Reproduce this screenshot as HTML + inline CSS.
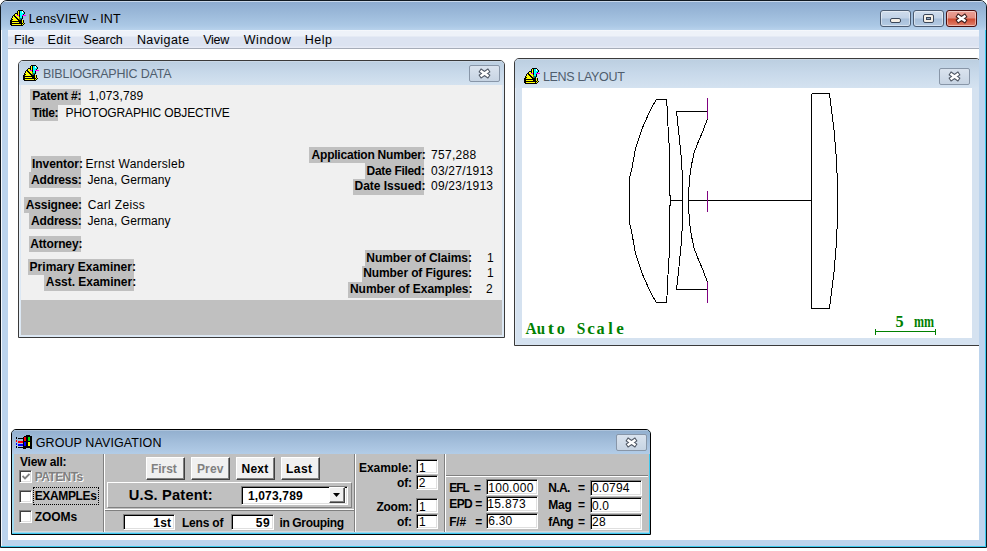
<!DOCTYPE html>
<html><head><meta charset="utf-8">
<style>
*{box-sizing:border-box}
html,body{margin:0;padding:0}
body{width:987px;height:551px;position:relative;overflow:hidden;background:#fff;font-family:"Liberation Sans",sans-serif;color:#000}
.a{position:absolute}
.tx{position:absolute;white-space:nowrap;line-height:20px;color:#000}
#win{left:0;top:0;width:987px;height:548px;background:#bcd4ed;border:1px solid #101820;border-radius:7px 7px 0 0;box-shadow:inset -1px -1px 0 #3ccbee,inset 1px 0 0 #f6f9fd}
#tbar{left:1px;top:1px;width:985px;height:29px;border-radius:6px 6px 0 0;background:linear-gradient(#c9d8ea 0,#c9d8ea 1px,#8eacd0 1px,#9cbada 45%,#abc8e5 85%,#b8d2ec 100%)}
#menu{left:8px;top:30px;width:971px;height:19px;background:linear-gradient(#fbfcfe 0,#eef2f9 1px,#eef2f9 6px,#dce3f1 7px,#dce3f1 16px,#e6eaf5 17px,#e6eaf5 18px,#a6acb8 18px)}
#client{left:8px;top:49px;width:971px;height:491px;background:#fff}
.cbtn{position:absolute;border:1px solid #4c5c72;border-radius:3px;box-shadow:inset 0 0 0 1px rgba(255,255,255,0.45)}
.child{position:absolute;border:1px solid #3a3a3a;border-radius:5px 5px 0 0;overflow:hidden;box-shadow:inset 1px 1px 0 rgba(255,255,255,0.35)}
.lb{position:absolute;background:#c0c0c0;height:16px}
.xb{position:absolute;border:1px solid #8896a8;border-radius:2px;background:linear-gradient(#dae3ee,#c7d4e3)}
.fld{position:absolute;background:#fff;border:1px solid;border-color:#808080 #fff #fff #808080;box-shadow:inset 1px 1px #000,inset -1px -1px #dfdfdf}
.btn{position:absolute;background:#f0f0f0;border:1px solid;border-color:#fff #404040 #404040 #fff;box-shadow:inset -1px -1px #808080}
.cb{position:absolute;width:13px;height:13px;background:#fff;border:1px solid;border-color:#808080 #fff #fff #808080;box-shadow:inset 1px 1px #404040,inset -1px -1px #dfdfdf}
.vd{position:absolute;width:1px;background:#808080}
.vw{position:absolute;width:1px;background:#fff}
</style></head><body>
<div id="win" class="a"></div>
<div id="tbar" class="a"></div>
<svg class="a" style="left:10px;top:10px" width="16" height="16"><use href="#lensico"/></svg>

<!-- caption buttons -->
<div class="cbtn" style="left:880px;top:10px;width:31px;height:17px;background:linear-gradient(#cfdcec 0,#c2d3e7 7px,#a7bfda 8px,#b5cbe3 100%)"></div>
<div class="a" style="left:890px;top:18px;width:11px;height:5px;border:1px solid #3a4658;border-radius:2px;background:#f5efe6"></div>
<div class="cbtn" style="left:913px;top:10px;width:31px;height:17px;background:linear-gradient(#cfdcec 0,#c2d3e7 7px,#a7bfda 8px,#b5cbe3 100%)"></div>
<div class="a" style="left:923px;top:14px;width:11px;height:9px;border:1px solid #3a4658;border-radius:2px;background:#f5efe6"></div>
<div class="a" style="left:926px;top:17px;width:5px;height:3px;border:1px solid #3a4658;background:#8fa6c0"></div>
<div class="cbtn" style="left:946px;top:10px;width:31px;height:17px;border-color:#4a0c0c;background:linear-gradient(#eba197 0,#e38d80 7px,#cf4a30 8px,#e0826e 100%)"></div>
<svg class="a" style="left:955px;top:13px" width="13" height="11" viewBox="0 0 13 11">
<path d="M3.5 3.4 L9.5 7.6 M9.5 3.4 L3.5 7.6" stroke="#3a1c1c" stroke-width="4.4" stroke-linecap="square"/>
<path d="M3.5 3.4 L9.5 7.6 M9.5 3.4 L3.5 7.6" stroke="#fff" stroke-width="2.4" stroke-linecap="square"/>
</svg>

<div id="menu" class="a"></div>
<div id="client" class="a"></div>

<!-- ===== BIBLIOGRAPHIC DATA ===== -->
<div class="child" style="left:18px;top:60px;width:487px;height:278px;background:#dce8f4">
  <div class="a" style="left:0;top:0;width:485px;height:24px;background:linear-gradient(#d9e2ec 0,#bccfe1 1px,#c8d9ea 50%,#d4e2f0 100%)"></div>
  <div class="a" style="left:2px;top:24px;width:481px;height:250px;background:#f0f0f0"></div>
  <div class="a" style="left:2px;top:239px;width:481px;height:35px;background:#c0c0c0"></div>
</div>
<svg class="a" style="left:23px;top:65px" width="16" height="16"><use href="#lensico"/></svg>
<div class="xb" style="left:469px;top:65px;width:31px;height:17px"></div>
<svg class="a" style="left:478px;top:68px" width="13" height="11"><use href="#xglyph"/></svg>

<div class="lb" style="left:30px;top:89px;width:51px"></div>
<div class="lb" style="left:30px;top:105px;width:28px"></div>
<div class="lb" style="left:31px;top:156px;width:50px"></div>
<div class="lb" style="left:29px;top:172px;width:52px"></div>
<div class="lb" style="left:24px;top:197px;width:57px"></div>
<div class="lb" style="left:29px;top:213px;width:52px"></div>
<div class="lb" style="left:29px;top:236px;width:52px"></div>
<div class="lb" style="left:28px;top:259px;width:106px"></div>
<div class="lb" style="left:44px;top:275px;width:90px"></div>
<div class="lb" style="left:309px;top:147px;width:115px"></div>
<div class="lb" style="left:365px;top:163px;width:59px"></div>
<div class="lb" style="left:353px;top:179px;width:71px"></div>
<div class="lb" style="left:365px;top:250px;width:105px"></div>
<div class="lb" style="left:362px;top:266px;width:108px"></div>
<div class="lb" style="left:348px;top:282px;width:122px"></div>

<!-- ===== LENS LAYOUT ===== -->
<div class="a" style="left:514px;top:58px;width:465px;height:288px;overflow:hidden">
 <div class="child" style="left:0;top:0;width:467px;height:288px;background:#d5e2f0">
  <div class="a" style="left:0;top:0;width:465px;height:29px;background:linear-gradient(#d9e2ec 0,#bccfe1 1px,#c8d9ea 50%,#d4e2f0 100%)"></div>
  <div class="a" style="left:7px;top:29px;width:450px;height:250px;background:#fff"></div>
 </div>
</div>
<svg class="a" style="left:524px;top:68px" width="16" height="16"><use href="#lensico"/></svg>
<div class="xb" style="left:939px;top:68px;width:31px;height:17px"></div>
<svg class="a" style="left:948px;top:71px" width="13" height="11"><use href="#xglyph"/></svg>

<svg class="a" style="left:0;top:0" width="987" height="551">
<g fill="none" stroke="#000" stroke-width="1" shape-rendering="crispEdges">
<polyline points="656.5,99.5 666.5,99.5 667.5,112 668.5,140 669.5,146 669.5,195.5 670.5,196 670.5,205 669.5,205.5 669.5,255 668.5,261 667.5,289 666.5,302.5 656.5,302.5 651.6,294.6 648.1,287 641.8,272.8 635.3,252.6 632,233.7 629.5,222.5 629.5,178.5 632,168.3 635.3,149.4 641.8,129.2 648.1,115 651.6,107.4 656.5,99.5"/>
<polyline points="676.5,111.5 707.5,111.5 707.5,118.5 703,131 699,140 694,153 691.5,165 689.5,179 688.5,195 688.5,206 689.5,222 691.5,236 694,248 699,261 703,270 707.5,282.5 707.5,289.5 676.5,289.5 679.5,262 681.5,241 682.5,222 682.5,179 681.5,160 679.5,139.5 676.5,111.5"/>
<polyline points="811.5,93.5 829.5,93.5 831.5,110 834,130 836.5,160 837.5,185 837.5,217 836.5,242 834,272 831.5,292 829.5,308.5 811.5,308.5 811.5,93.5"/>
<line x1="671" y1="200.5" x2="682" y2="200.5"/>
<line x1="689" y1="200.5" x2="811" y2="200.5"/>
</g>
<g stroke="#800080" stroke-width="1" shape-rendering="crispEdges">
<line x1="707.5" y1="98" x2="707.5" y2="119"/>
<line x1="707.5" y1="191" x2="707.5" y2="212"/>
<line x1="707.5" y1="282" x2="707.5" y2="303"/>
</g>
<g stroke="#008000" stroke-width="1" shape-rendering="crispEdges">
<line x1="875" y1="331.5" x2="936" y2="331.5"/>
<line x1="875.5" y1="329" x2="875.5" y2="335"/>
<line x1="935.5" y1="329" x2="935.5" y2="335"/>
</g>
</svg>

<!-- ===== GROUP NAVIGATION ===== -->
<div class="child" style="left:11px;top:429px;width:640px;height:106px;background:#9fd9f0;border-color:#000;box-shadow:inset -1px -1px 0 #40c8ee">
  <div class="a" style="left:0;top:0;width:638px;height:24px;background:linear-gradient(#c8d6e6 0,#93b0cf 1px,#a3bedb 50%,#b2cce7 100%)"></div>
  <div class="a" style="left:2px;top:24px;width:635px;height:78px;background:#c0c0c0;border-bottom:1px solid #d6d6d6"></div>
</div>
<svg class="a" style="left:16px;top:434px" width="17" height="16" viewBox="0 0 17 16" shape-rendering="crispEdges">
<path d="M7 3h1V2h2V1h4v1h2v13h-2v-1h-4v1H7z" fill="#000"/>
<rect x="8" y="3" width="2" height="4" fill="#f00"/><rect x="12" y="3" width="2" height="4" fill="#0d0"/>
<rect x="8" y="8" width="2" height="4" fill="#00f"/><rect x="12" y="8" width="2" height="4" fill="#ff0"/>
<rect x="2" y="4" width="5" height="1" fill="#000"/><rect x="2" y="7" width="5" height="2" fill="#f00"/>
<rect x="2" y="10" width="5" height="2" fill="#00f"/><rect x="2" y="13" width="5" height="1" fill="#000"/>
<rect x="0" y="3" width="1" height="2" fill="#000"/><rect x="0" y="6" width="1" height="2" fill="#f00"/>
<rect x="0" y="9" width="1" height="2" fill="#00f"/><rect x="0" y="12" width="1" height="2" fill="#000"/>
</svg>
<div class="xb" style="left:616px;top:434px;width:31px;height:17px"></div>
<svg class="a" style="left:625px;top:437px" width="13" height="11"><use href="#xglyph"/></svg>

<div class="cb" style="left:19px;top:470px"></div>
<svg class="a" style="left:22px;top:473px" width="8" height="7"><path d="M0.5 3 L3 5.5 L7.5 1" stroke="#808080" stroke-width="1.8" fill="none"/></svg>
<div class="cb" style="left:19px;top:490px"></div>
<div class="a" style="left:33px;top:487px;width:66px;height:18px;border:1px dotted #000"></div>
<div class="cb" style="left:19px;top:510px"></div>

<div class="vd" style="left:103px;top:454px;height:78px"></div>
<div class="vw" style="left:104px;top:454px;height:78px"></div>

<div class="btn" style="left:146px;top:457px;width:39px;height:23px"></div>
<div class="btn" style="left:191px;top:457px;width:39px;height:23px"></div>
<div class="btn" style="left:236px;top:457px;width:39px;height:23px"></div>
<div class="btn" style="left:281px;top:457px;width:39px;height:23px"></div>

<div class="a" style="left:107px;top:482px;width:245px;height:26px;border:1px solid;border-color:#fff #808080 #808080 #fff"></div>
<div class="fld" style="left:241px;top:486px;width:107px;height:19px"></div>
<div class="btn" style="left:329px;top:487px;width:16px;height:16px"></div>
<svg class="a" style="left:333px;top:493px" width="8" height="5"><path d="M0 0h7L3.5 4z" fill="#000"/></svg>

<div class="a" style="left:105px;top:509px;width:249px;height:1px;background:#fff"></div>
<div class="a" style="left:105px;top:510px;width:249px;height:1px;background:#808080"></div>

<div class="fld" style="left:123px;top:514px;width:52px;height:16px"></div>
<div class="fld" style="left:231px;top:514px;width:43px;height:16px"></div>

<div class="vd" style="left:354px;top:454px;height:78px"></div>
<div class="vw" style="left:355px;top:454px;height:78px"></div>

<div class="fld" style="left:416px;top:459px;width:22px;height:15px"></div>
<div class="fld" style="left:416px;top:475px;width:22px;height:15px"></div>
<div class="fld" style="left:416px;top:498px;width:22px;height:15px"></div>
<div class="fld" style="left:416px;top:514px;width:22px;height:15px"></div>

<div class="vd" style="left:444px;top:454px;height:78px"></div>
<div class="vw" style="left:445px;top:454px;height:78px"></div>
<div class="a" style="left:446px;top:475px;width:202px;height:1px;background:#808080"></div>
<div class="a" style="left:446px;top:476px;width:202px;height:1px;background:#fff"></div>

<div class="fld" style="left:486px;top:479px;width:52px;height:16px"></div>
<div class="fld" style="left:486px;top:496px;width:52px;height:16px"></div>
<div class="fld" style="left:486px;top:513px;width:52px;height:16px"></div>
<div class="fld" style="left:590px;top:480px;width:52px;height:16px"></div>
<div class="fld" style="left:590px;top:497px;width:52px;height:16px"></div>
<div class="fld" style="left:590px;top:514px;width:52px;height:16px"></div>

<div class="tx" style="left:28.80px;top:9px;letter-spacing:0.111px;font-size:12.5px;">LensVIEW - INT</div>
<div class="tx" style="left:14.00px;top:30px;letter-spacing:0.120px;font-size:12.5px;">File</div>
<div class="tx" style="left:47.40px;top:30px;letter-spacing:0.540px;font-size:12.5px;">Edit</div>
<div class="tx" style="left:83.40px;top:30px;letter-spacing:-0.036px;font-size:12.5px;">Search</div>
<div class="tx" style="left:136.90px;top:30px;letter-spacing:0.411px;font-size:12.5px;">Navigate</div>
<div class="tx" style="left:203.30px;top:30px;letter-spacing:-0.300px;font-size:12.5px;">View</div>
<div class="tx" style="left:243.80px;top:30px;letter-spacing:0.504px;font-size:12.5px;">Window</div>
<div class="tx" style="left:304.70px;top:30px;letter-spacing:0.540px;font-size:12.5px;">Help</div>
<div class="tx" style="left:42.90px;top:64px;letter-spacing:-0.211px;font-size:12.5px;color:#4f5d6d;">BIBLIOGRAPHIC DATA</div>
<div class="tx" style="left:543.00px;top:67px;letter-spacing:-0.342px;font-size:12.5px;color:#4f5d6d;">LENS LAYOUT</div>
<div class="tx" style="left:35.70px;top:433px;letter-spacing:0.096px;font-size:12.5px;">GROUP NAVIGATION</div>
<div class="tx" style="left:32.20px;top:86px;letter-spacing:-0.180px;font-size:12px;font-weight:bold;">Patent #:</div>
<div class="tx" style="left:88.60px;top:86px;letter-spacing:0.158px;font-size:12px;">1,073,789</div>
<div class="tx" style="left:32.10px;top:103px;letter-spacing:-0.432px;font-size:12px;font-weight:bold;">Title:</div>
<div class="tx" style="left:65.60px;top:103px;letter-spacing:-0.137px;font-size:12px;">PHOTOGRAPHIC OBJECTIVE</div>
<div class="tx" style="left:32.10px;top:154px;letter-spacing:-0.068px;font-size:12px;font-weight:bold;">Inventor:</div>
<div class="tx" style="left:85.40px;top:154px;letter-spacing:0.288px;font-size:12px;">Ernst Wandersleb</div>
<div class="tx" style="left:31.10px;top:170px;letter-spacing:-0.180px;font-size:12px;font-weight:bold;">Address:</div>
<div class="tx" style="left:87.50px;top:170px;letter-spacing:0.090px;font-size:12px;">Jena, Germany</div>
<div class="tx" style="left:25.80px;top:195px;letter-spacing:-0.135px;font-size:12px;font-weight:bold;">Assignee:</div>
<div class="tx" style="left:87.70px;top:195px;letter-spacing:0.340px;font-size:12px;">Carl Zeiss</div>
<div class="tx" style="left:31.10px;top:211px;letter-spacing:-0.180px;font-size:12px;font-weight:bold;">Address:</div>
<div class="tx" style="left:87.50px;top:211px;letter-spacing:0.090px;font-size:12px;">Jena, Germany</div>
<div class="tx" style="left:30.20px;top:234px;letter-spacing:-0.135px;font-size:12px;font-weight:bold;">Attorney:</div>
<div class="tx" style="left:29.60px;top:257px;letter-spacing:0.022px;font-size:12px;font-weight:bold;">Primary Examiner:</div>
<div class="tx" style="left:45.80px;top:272px;letter-spacing:-0.026px;font-size:12px;font-weight:bold;">Asst. Examiner:</div>
<div class="tx" style="left:311.60px;top:145px;letter-spacing:-0.220px;font-size:12px;font-weight:bold;">Application Number:</div>
<div class="tx" style="left:431.00px;top:145px;letter-spacing:0.300px;font-size:12px;">757,288</div>
<div class="tx" style="left:366.60px;top:161px;letter-spacing:-0.306px;font-size:12px;font-weight:bold;">Date Filed:</div>
<div class="tx" style="left:431.00px;top:161px;letter-spacing:0.220px;font-size:12px;">03/27/1913</div>
<div class="tx" style="left:354.60px;top:176px;letter-spacing:-0.032px;font-size:12px;font-weight:bold;">Date Issued:</div>
<div class="tx" style="left:431.00px;top:176px;letter-spacing:0.220px;font-size:12px;">09/23/1913</div>
<div class="tx" style="left:366.30px;top:248px;letter-spacing:-0.067px;font-size:12px;font-weight:bold;">Number of Claims:</div>
<div class="tx" style="left:486.90px;top:248px;letter-spacing:0.000px;font-size:12px;">1</div>
<div class="tx" style="left:363.30px;top:263px;letter-spacing:-0.116px;font-size:12px;font-weight:bold;">Number of Figures:</div>
<div class="tx" style="left:486.90px;top:263px;letter-spacing:0.000px;font-size:12px;">1</div>
<div class="tx" style="left:350.00px;top:279px;letter-spacing:-0.050px;font-size:12px;font-weight:bold;">Number of Examples:</div>
<div class="tx" style="left:486.10px;top:279px;letter-spacing:0.000px;font-size:12px;">2</div>
<div class="tx" style="left:19.90px;top:452px;letter-spacing:-0.135px;font-size:12px;font-weight:bold;">View all:</div>
<div class="tx" style="left:35.80px;top:468px;letter-spacing:-0.600px;font-size:12px;font-weight:bold;color:#808080;color:#fff;">PATENTs</div>
<div class="tx" style="left:34.80px;top:467px;letter-spacing:-0.600px;font-size:12px;font-weight:bold;color:#808080;">PATENTs</div>
<div class="tx" style="left:34.70px;top:486px;letter-spacing:-0.360px;font-size:12px;font-weight:bold;">EXAMPLEs</div>
<div class="tx" style="left:34.70px;top:507px;letter-spacing:-0.046px;font-size:12px;font-weight:bold;">ZOOMs</div>
<div class="tx" style="left:151.10px;top:459px;letter-spacing:-0.090px;font-size:12px;font-weight:bold;color:#808080;">First</div>
<div class="tx" style="left:196.90px;top:459px;letter-spacing:0.180px;font-size:12px;font-weight:bold;color:#808080;">Prev</div>
<div class="tx" style="left:241.60px;top:459px;letter-spacing:0.180px;font-size:12px;font-weight:bold;">Next</div>
<div class="tx" style="left:286.10px;top:459px;letter-spacing:0.420px;font-size:12px;font-weight:bold;">Last</div>
<div class="tx" style="left:128.70px;top:485px;letter-spacing:0.164px;font-size:14.67px;font-weight:bold;">U.S. Patent:</div>
<div class="tx" style="left:247.90px;top:486px;letter-spacing:0.181px;font-size:12px;font-weight:bold;">1,073,789</div>
<div class="tx" style="left:153.20px;top:513px;letter-spacing:0.270px;font-size:12px;font-weight:bold;">1st</div>
<div class="tx" style="left:182.00px;top:513px;letter-spacing:-0.210px;font-size:12px;font-weight:bold;">Lens of</div>
<div class="tx" style="left:255.70px;top:513px;letter-spacing:0.720px;font-size:12px;font-weight:bold;">59</div>
<div class="tx" style="left:279.40px;top:513px;letter-spacing:-0.342px;font-size:12px;font-weight:bold;">in Grouping</div>
<div class="tx" style="left:359.00px;top:458px;letter-spacing:-0.051px;font-size:12px;font-weight:bold;height:14px;overflow:hidden;">Example:</div>
<div class="tx" style="left:418.90px;top:458px;letter-spacing:0.000px;font-size:12px;">1</div>
<div class="tx" style="left:397.00px;top:473px;letter-spacing:-0.180px;font-size:12px;font-weight:bold;">of:</div>
<div class="tx" style="left:418.80px;top:473px;letter-spacing:0.000px;font-size:12px;">2</div>
<div class="tx" style="left:376.40px;top:497px;letter-spacing:-0.224px;font-size:12px;font-weight:bold;">Zoom:</div>
<div class="tx" style="left:418.90px;top:497px;letter-spacing:0.000px;font-size:12px;">1</div>
<div class="tx" style="left:397.00px;top:512px;letter-spacing:-0.180px;font-size:12px;font-weight:bold;">of:</div>
<div class="tx" style="left:418.90px;top:512px;letter-spacing:0.000px;font-size:12px;">1</div>
<div class="tx" style="left:449.30px;top:478px;letter-spacing:-1.080px;font-size:12px;font-weight:bold;">EFL</div>
<div class="tx" style="left:473.90px;top:478px;letter-spacing:0.000px;font-size:12px;font-weight:bold;">=</div>
<div class="tx" style="left:449.30px;top:494px;letter-spacing:-0.630px;font-size:12px;font-weight:bold;">EPD</div>
<div class="tx" style="left:475.20px;top:494px;letter-spacing:0.000px;font-size:12px;font-weight:bold;">=</div>
<div class="tx" style="left:449.30px;top:512px;letter-spacing:-0.270px;font-size:12px;font-weight:bold;">F/#</div>
<div class="tx" style="left:475.20px;top:512px;letter-spacing:0.000px;font-size:12px;font-weight:bold;">=</div>
<div class="tx" style="left:488.20px;top:478px;letter-spacing:0.300px;font-size:12px;">100.000</div>
<div class="tx" style="left:487.30px;top:494px;letter-spacing:0.324px;font-size:12px;">15.873</div>
<div class="tx" style="left:488.30px;top:511px;letter-spacing:0.180px;font-size:12px;">6.30</div>
<div class="tx" style="left:548.20px;top:478px;letter-spacing:-0.600px;font-size:12px;font-weight:bold;">N.A.</div>
<div class="tx" style="left:578.00px;top:478px;letter-spacing:0.000px;font-size:12px;font-weight:bold;">=</div>
<div class="tx" style="left:548.20px;top:495px;letter-spacing:-0.180px;font-size:12px;font-weight:bold;">Mag</div>
<div class="tx" style="left:578.00px;top:495px;letter-spacing:0.000px;font-size:12px;font-weight:bold;">=</div>
<div class="tx" style="left:548.30px;top:512px;letter-spacing:-0.660px;font-size:12px;font-weight:bold;">fAng</div>
<div class="tx" style="left:578.00px;top:512px;letter-spacing:0.000px;font-size:12px;font-weight:bold;">=</div>
<div class="tx" style="left:591.90px;top:478px;letter-spacing:0.180px;font-size:12px;">0.0794</div>
<div class="tx" style="left:591.90px;top:496px;letter-spacing:0.180px;font-size:12px;">0.0</div>
<div class="tx" style="left:591.90px;top:512px;letter-spacing:0.360px;font-size:12px;">28</div>
<div class="a" style="left:521.10px;top:318.9px;width:20px;text-align:center;font-family:'Liberation Serif',serif;font-weight:bold;font-size:16.3px;line-height:20px;color:#008000;transform:scaleX(0.95)">A</div>
<div class="a" style="left:531.03px;top:318.9px;width:20px;text-align:center;font-family:'Liberation Serif',serif;font-weight:bold;font-size:16.3px;line-height:20px;color:#008000;transform:scaleX(0.92)">u</div>
<div class="a" style="left:540.96px;top:318.9px;width:20px;text-align:center;font-family:'Liberation Serif',serif;font-weight:bold;font-size:16.3px;line-height:20px;color:#008000;transform:scaleX(1.15)">t</div>
<div class="a" style="left:550.89px;top:318.9px;width:20px;text-align:center;font-family:'Liberation Serif',serif;font-weight:bold;font-size:16.3px;line-height:20px;color:#008000;transform:scaleX(1.00)">o</div>
<div class="a" style="left:570.75px;top:318.9px;width:20px;text-align:center;font-family:'Liberation Serif',serif;font-weight:bold;font-size:16.3px;line-height:20px;color:#008000;transform:scaleX(0.95)">S</div>
<div class="a" style="left:580.68px;top:318.9px;width:20px;text-align:center;font-family:'Liberation Serif',serif;font-weight:bold;font-size:16.3px;line-height:20px;color:#008000;transform:scaleX(1.05)">c</div>
<div class="a" style="left:590.61px;top:318.9px;width:20px;text-align:center;font-family:'Liberation Serif',serif;font-weight:bold;font-size:16.3px;line-height:20px;color:#008000;transform:scaleX(1.00)">a</div>
<div class="a" style="left:600.54px;top:318.9px;width:20px;text-align:center;font-family:'Liberation Serif',serif;font-weight:bold;font-size:16.3px;line-height:20px;color:#008000;transform:scaleX(1.00)">l</div>
<div class="a" style="left:610.47px;top:318.9px;width:20px;text-align:center;font-family:'Liberation Serif',serif;font-weight:bold;font-size:16.3px;line-height:20px;color:#008000;transform:scaleX(1.05)">e</div>
<div class="a" style="left:889.50px;top:311.8px;width:20px;text-align:center;font-family:'Liberation Serif',serif;font-weight:bold;font-size:16.3px;line-height:20px;color:#008000;transform:scaleX(1.00)">5</div>
<div class="a" style="left:909.36px;top:311.8px;width:20px;text-align:center;font-family:'Liberation Serif',serif;font-weight:bold;font-size:16.3px;line-height:20px;color:#008000;transform:scaleX(0.74)">m</div>
<div class="a" style="left:919.29px;top:311.8px;width:20px;text-align:center;font-family:'Liberation Serif',serif;font-weight:bold;font-size:16.3px;line-height:20px;color:#008000;transform:scaleX(0.74)">m</div>

<svg width="0" height="0" style="position:absolute">
<defs>
<g id="xglyph">
<path d="M3.5 3.4 L9.5 7.6 M9.5 3.4 L3.5 7.6" stroke="#4e5663" stroke-width="4.4" stroke-linecap="square"/>
<path d="M3.5 3.4 L9.5 7.6 M9.5 3.4 L3.5 7.6" stroke="#fff" stroke-width="2.4" stroke-linecap="square"/>
</g>
<g id="lensico" shape-rendering="crispEdges">
<rect x="8" y="0" width="5" height="1" fill="#000"/>
<rect x="7" y="1" width="1" height="1" fill="#000"/>
<rect x="8" y="1" width="1" height="1" fill="#ff0"/>
<rect x="9" y="1" width="1" height="1" fill="#000"/>
<rect x="10" y="1" width="2" height="1" fill="#0ff"/>
<rect x="12" y="1" width="1" height="1" fill="#fff"/>
<rect x="13" y="1" width="1" height="1" fill="#000"/>
<rect x="7" y="2" width="1" height="1" fill="#000"/>
<rect x="8" y="2" width="1" height="1" fill="#ff0"/>
<rect x="9" y="2" width="1" height="1" fill="#000"/>
<rect x="10" y="2" width="2" height="1" fill="#0ff"/>
<rect x="12" y="2" width="1" height="1" fill="#fff"/>
<rect x="13" y="2" width="1" height="1" fill="#0ff"/>
<rect x="14" y="2" width="1" height="1" fill="#000"/>
<rect x="5" y="3" width="3" height="1" fill="#000"/>
<rect x="8" y="3" width="1" height="1" fill="#ff0"/>
<rect x="9" y="3" width="1" height="1" fill="#000"/>
<rect x="10" y="3" width="4" height="1" fill="#0ff"/>
<rect x="14" y="3" width="1" height="1" fill="#000"/>
<rect x="4" y="4" width="1" height="1" fill="#000"/>
<rect x="5" y="4" width="2" height="1" fill="#ff0"/>
<rect x="7" y="4" width="1" height="1" fill="#000"/>
<rect x="8" y="4" width="1" height="1" fill="#ff0"/>
<rect x="9" y="4" width="1" height="1" fill="#000"/>
<rect x="10" y="4" width="3" height="1" fill="#0ff"/>
<rect x="13" y="4" width="1" height="1" fill="#000"/>
<rect x="3" y="5" width="2" height="1" fill="#000"/>
<rect x="5" y="5" width="2" height="1" fill="#ff0"/>
<rect x="7" y="5" width="2" height="1" fill="#f0f"/>
<rect x="9" y="5" width="1" height="1" fill="#000"/>
<rect x="10" y="5" width="2" height="1" fill="#0ff"/>
<rect x="12" y="5" width="4" height="1" fill="#f0f"/>
<rect x="2" y="6" width="1" height="1" fill="#000"/>
<rect x="3" y="6" width="1" height="1" fill="#ff0"/>
<rect x="4" y="6" width="2" height="1" fill="#000"/>
<rect x="6" y="6" width="3" height="1" fill="#ff0"/>
<rect x="9" y="6" width="1" height="1" fill="#000"/>
<rect x="10" y="6" width="2" height="1" fill="#0ff"/>
<rect x="12" y="6" width="1" height="1" fill="#000"/>
<rect x="2" y="7" width="1" height="1" fill="#000"/>
<rect x="3" y="7" width="2" height="1" fill="#ff0"/>
<rect x="5" y="7" width="2" height="1" fill="#000"/>
<rect x="7" y="7" width="2" height="1" fill="#ff0"/>
<rect x="9" y="7" width="1" height="1" fill="#808000"/>
<rect x="10" y="7" width="2" height="1" fill="#0ff"/>
<rect x="12" y="7" width="1" height="1" fill="#000"/>
<rect x="1" y="8" width="1" height="1" fill="#000"/>
<rect x="2" y="8" width="4" height="1" fill="#ff0"/>
<rect x="6" y="8" width="2" height="1" fill="#000"/>
<rect x="8" y="8" width="1" height="1" fill="#ff0"/>
<rect x="9" y="8" width="1" height="1" fill="#808000"/>
<rect x="10" y="8" width="2" height="1" fill="#008080"/>
<rect x="12" y="8" width="1" height="1" fill="#000"/>
<rect x="1" y="9" width="2" height="1" fill="#000"/>
<rect x="3" y="9" width="4" height="1" fill="#ff0"/>
<rect x="7" y="9" width="2" height="1" fill="#000"/>
<rect x="9" y="9" width="1" height="1" fill="#808000"/>
<rect x="10" y="9" width="1" height="1" fill="#008080"/>
<rect x="11" y="9" width="1" height="1" fill="#000"/>
<rect x="0" y="10" width="2" height="1" fill="#000"/>
<rect x="2" y="10" width="6" height="1" fill="#ff0"/>
<rect x="8" y="10" width="4" height="1" fill="#000"/>
<rect x="12" y="10" width="1" height="1" fill="#ff0"/>
<rect x="13" y="10" width="1" height="1" fill="#000"/>
<rect x="0" y="11" width="12" height="1" fill="#000"/>
<rect x="12" y="11" width="1" height="1" fill="#ff0"/>
<rect x="13" y="11" width="1" height="1" fill="#000"/>
<rect x="0" y="12" width="2" height="1" fill="#000"/>
<rect x="2" y="12" width="7" height="1" fill="#ff0"/>
<rect x="9" y="12" width="3" height="1" fill="#000"/>
<rect x="12" y="12" width="1" height="1" fill="#ff0"/>
<rect x="13" y="12" width="1" height="1" fill="#000"/>
<rect x="0" y="13" width="13" height="1" fill="#000"/>
<rect x="13" y="13" width="1" height="1" fill="#ff0"/>
<rect x="14" y="13" width="1" height="1" fill="#000"/>
<rect x="0" y="14" width="2" height="1" fill="#000"/>
<rect x="2" y="14" width="9" height="1" fill="#ff0"/>
<rect x="11" y="14" width="1" height="1" fill="#000"/>
<rect x="12" y="14" width="1" height="1" fill="#ff0"/>
<rect x="13" y="14" width="1" height="1" fill="#000"/>
<rect x="1" y="15" width="12" height="1" fill="#000"/>
</g>
</defs>
</svg>
</body></html>
